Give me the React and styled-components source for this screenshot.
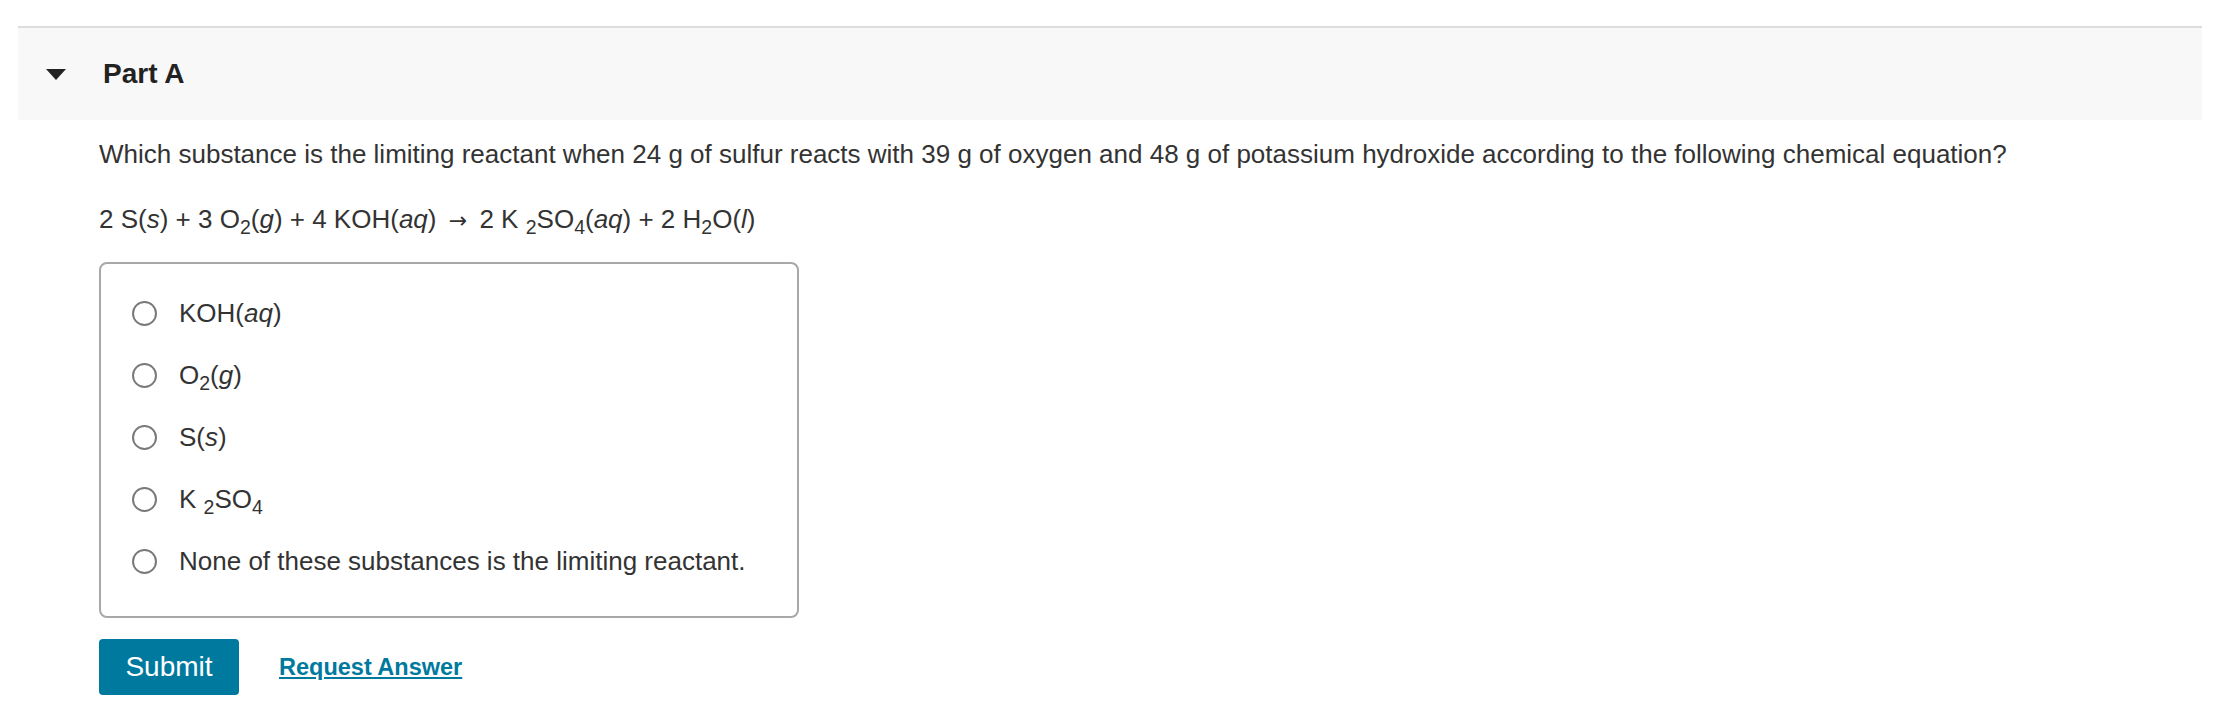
import React from "react"
import styled, { createGlobalStyle } from "styled-components"

const GlobalStyle = createGlobalStyle`
  html, body {
    margin: 0;
    padding: 0;
    background: #fff;
  }
  body {
    font-family: "Liberation Sans", Arial, Helvetica, sans-serif;
    color: #333;
  }
`

const Page = styled.div`
  padding: 26px 14px 0 18px;
`

const PartHeader = styled.div`
  display: flex;
  align-items: center;
  height: 92px;
  background: #f8f8f8;
  border-top: 2px solid #dddddd;
`

const Caret = styled.span`
  width: 0;
  height: 0;
  margin-left: 28px;
  border-left: 10px solid transparent;
  border-right: 10px solid transparent;
  border-top: 11px solid #222;
`

const PartTitle = styled.h2`
  margin: 0 0 0 37px;
  font-size: 28px;
  font-weight: 700;
  color: #222;
`

const Content = styled.div`
  padding: 17px 0 0 81px;
`

const Paragraph = styled.p`
  margin: 0 0 ${({ $gap }) => $gap}px;
  font-size: 26px;
  line-height: 34px;
  color: #333;
`

const Sub = styled.sub`
  font-size: 0.75em;
  line-height: 0;
  vertical-align: -0.3em;
`

const Arrow = styled.span`
  font-family: "DejaVu Sans", sans-serif;
  font-size: 0.85em;
  padding: 0 5px;
`

const ChoiceBox = styled.div`
  width: 700px;
  box-sizing: border-box;
  border: 2px solid #a8a8a8;
  border-radius: 8px;
  padding: 18px 0 24px 31px;
`

const Choice = styled.label`
  display: flex;
  align-items: center;
  height: 62px;
  font-size: 26px;
  color: #333;
  cursor: pointer;
`

const Radio = styled.span`
  width: 25px;
  height: 25px;
  box-sizing: border-box;
  border: 2px solid #7a7a7a;
  border-radius: 50%;
  margin-right: 22px;
  flex-shrink: 0;
`

const Actions = styled.div`
  display: flex;
  align-items: center;
  gap: 40px;
  margin-top: 21px;
`

const SubmitButton = styled.button`
  width: 140px;
  height: 56px;
  border: none;
  border-radius: 4px;
  background: #00799e;
  color: #fff;
  font-family: inherit;
  font-size: 28px;
  cursor: pointer;
`

const RequestLink = styled.a`
  font-size: 23.5px;
  font-weight: 700;
  color: #00799e;
  text-decoration: underline;
  cursor: pointer;
`

const choices = [
  <>KOH(<i>aq</i>)</>,
  <>O<Sub>2</Sub>(<i>g</i>)</>,
  <>S(<i>s</i>)</>,
  <>K <Sub>2</Sub>SO<Sub>4</Sub></>,
  <>None of these substances is the limiting reactant.</>,
]

const App = () => {
  return (
    <Page>
      <GlobalStyle />
      <PartHeader>
        <Caret />
        <PartTitle>Part A</PartTitle>
      </PartHeader>
      <Content>
        <Paragraph $gap={31}>
          Which substance is the limiting reactant when 24 g of sulfur reacts with 39 g of oxygen and 48 g of potassium hydroxide according to the following chemical equation?
        </Paragraph>
        <Paragraph $gap={25}>
          2 S(<i>s</i>) + 3 O<Sub>2</Sub>(<i>g</i>) + 4 KOH(<i>aq</i>) <Arrow>→</Arrow> 2 K <Sub>2</Sub>SO<Sub>4</Sub>(<i>aq</i>) + 2 H<Sub>2</Sub>O(<i>l</i>)
        </Paragraph>
        <ChoiceBox>
          {choices.map((c, i) => (
            <Choice key={i}>
              <Radio />
              <span>{c}</span>
            </Choice>
          ))}
        </ChoiceBox>
        <Actions>
          <SubmitButton>Submit</SubmitButton>
          <RequestLink>Request Answer</RequestLink>
        </Actions>
      </Content>
    </Page>
  )
}

export default App
